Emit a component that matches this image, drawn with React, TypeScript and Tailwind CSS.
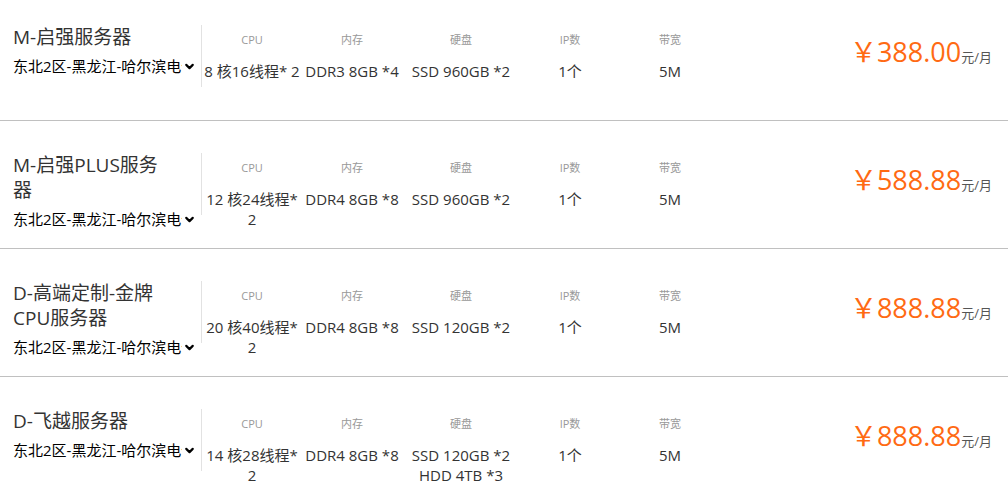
import { ChevronDown } from "lucide-react";

type Server = {
  id: string;
  name: string;
  cpu: string;
  mem: string;
  disk: string[];
  ip: string;
  bw: string;
  price: string;
};

const SERVERS: Server[] = [
  { id: "1", name: "M-启强服务器", cpu: "8 核16线程* 2", mem: "DDR3 8GB *4", disk: ["SSD 960GB *2"], ip: "1个", bw: "5M", price: "388.00" },
  { id: "2", name: "M-启强PLUS服务器", cpu: "12 核24线程* 2", mem: "DDR4 8GB *8", disk: ["SSD 960GB *2"], ip: "1个", bw: "5M", price: "588.88" },
  { id: "3", name: "D-高端定制-金牌CPU服务器", cpu: "20 核40线程* 2", mem: "DDR4 8GB *8", disk: ["SSD 120GB *2"], ip: "1个", bw: "5M", price: "888.88" },
  { id: "4", name: "D-飞越服务器", cpu: "14 核28线程* 2", mem: "DDR4 8GB *8", disk: ["SSD 120GB *2", "HDD 4TB *3"], ip: "1个", bw: "5M", price: "888.88" },
];

function Spec({ label, width, children }: { label: string; width: string; children: React.ReactNode }) {
  return (
    <div className={`${width} shrink-0 text-center`}>
      <div className="pt-2 text-[11px] leading-[14px] text-[#999]">{label}</div>
      <div className="mt-[14px] text-[15px] leading-[20px] text-[#333]">{children}</div>
    </div>
  );
}

export default function App() {
  return (
    <div
      className="w-[1008px] h-[499px] overflow-hidden bg-white"
      style={{ fontFamily: '"Open Sans", "Noto Sans CJK SC", sans-serif' }}
    >
      <div className="-mt-[7px]">
        {SERVERS.map((s) => (
          <div key={s.id} className="flex items-start h-[128px] border-b border-[#c0c0c0] pt-[32px]">
            {/* name + region */}
            <div className="w-[201px] shrink-0 pl-[13px]">
              <div className="w-[155px] text-[19px] leading-[25px] text-[#333]">{s.name}</div>
              <div className="flex items-center h-[32px] text-[15px] text-black">
                <span className="w-[169px] overflow-hidden whitespace-nowrap">东北2区-黑龙江-哈尔滨电信</span>
                <ChevronDown size={13} strokeWidth={4} className="ml-[1px]" />
              </div>
            </div>

            {/* specs */}
            <div className="flex">
              <div className="w-px h-[62px] bg-[#e2e2e2]" />
              <Spec label="CPU" width="w-[100px]">{s.cpu}</Spec>
              <Spec label="内存" width="w-[100px]">{s.mem}</Spec>
              <Spec label="硬盘" width="w-[118px]">
                {s.disk.map((d) => (
                  <div key={d}>{d}</div>
                ))}
              </Spec>
              <Spec label="IP数" width="w-[100px]">{s.ip}</Spec>
              <Spec label="带宽" width="w-[100px]">{s.bw}</Spec>
            </div>

            {/* price */}
            <div className="flex-1 flex justify-end items-baseline pr-[16px] mt-[7px]">
              <span className="text-[27px] leading-[40px] text-[#ff6a13]">￥{s.price}</span>
              <span className="text-[13px] text-[#555]">元/月</span>
            </div>
          </div>
        ))}
      </div>
    </div>
  );
}
